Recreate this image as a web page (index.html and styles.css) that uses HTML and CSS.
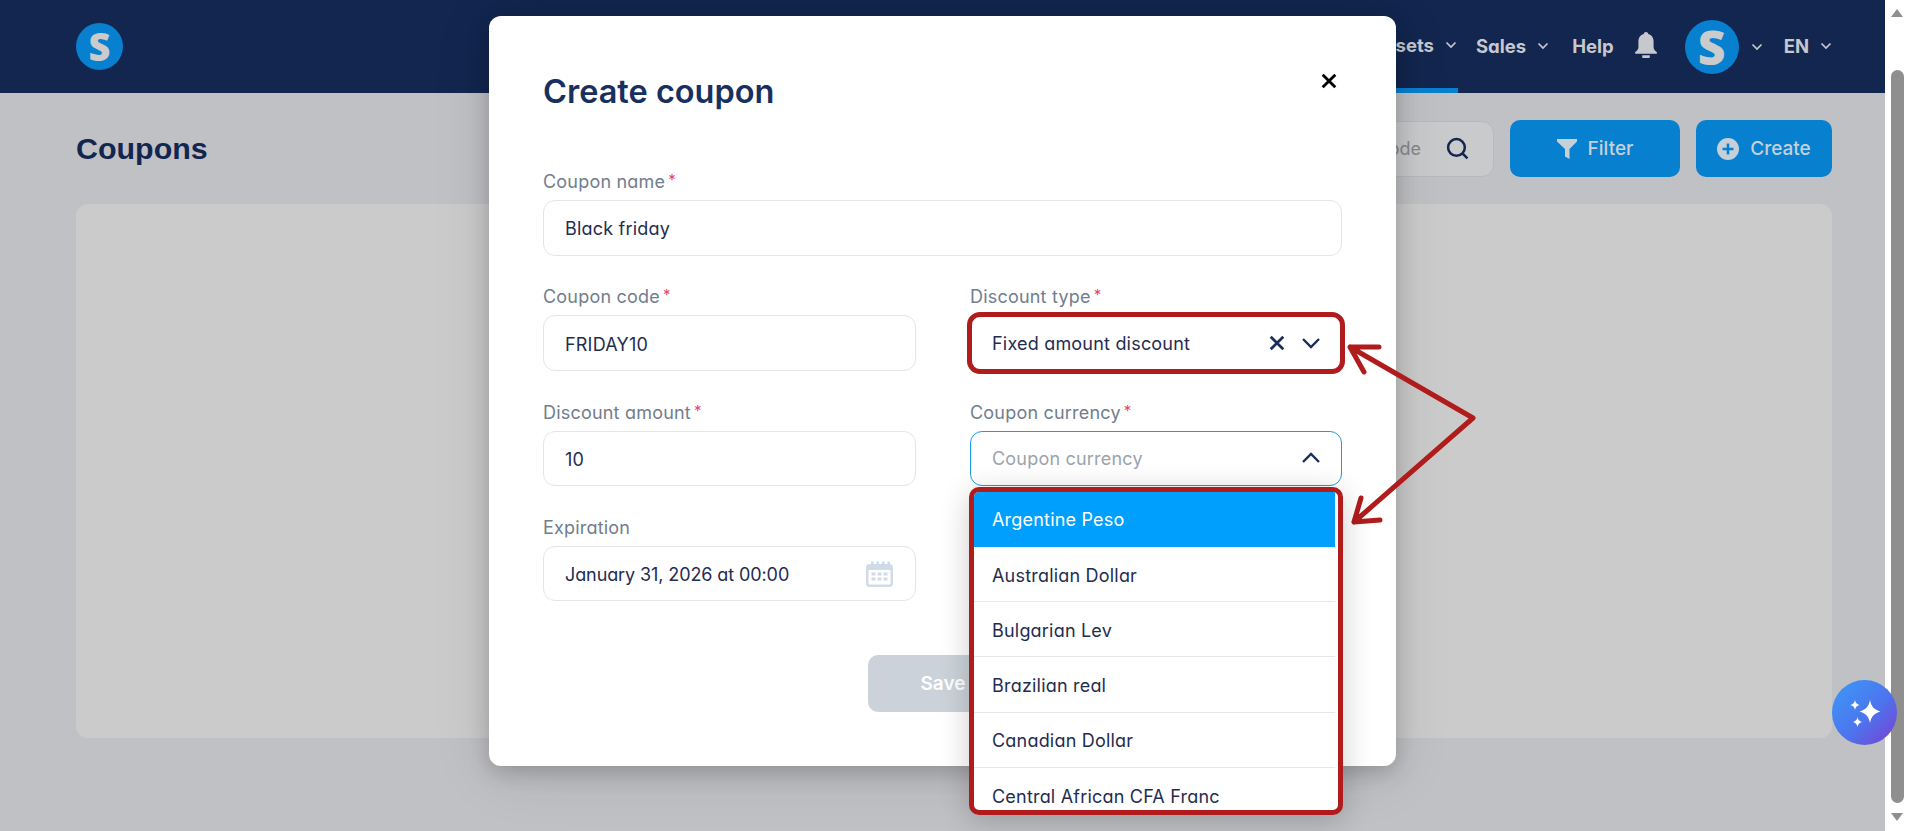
FILE: index.html
```html
<!DOCTYPE html>
<html lang="en">
<head>
<meta charset="utf-8">
<title>Coupons</title>
<link rel="stylesheet" href="styles.css">
</head>
<body>
<div class="app">
  <div class="page">
    <header class="topbar">
      <div class="logo">S</div>
      <nav class="nav">
        <div class="nav-item active"><span>Assets</span><svg class="chev" viewBox="0 0 12 8"><path d="M1.5 1.5 6 6l4.5-4.5"/></svg></div>
        <div class="nav-item"><span>Sales</span><svg class="chev" viewBox="0 0 12 8"><path d="M1.5 1.5 6 6l4.5-4.5"/></svg></div>
        <div class="nav-item"><span>Help</span></div>
        <svg class="bell" viewBox="0 0 22 24"><path d="M11 0c1.2 0 2 .8 2.1 1.9C16.5 2.800 18 5.600 18 9v5c0 1.500 1 3 3 4.500V20H1v-1.500C3 17 4 15.500 4 14V9c0-3.400 1.500-6.200 4.900-7.100C9 .8 9.800 0 11 0ZM7.500 21.500h7V23c0 .6-.4 1-1 1h-5c-.6 0-1-.4-1-1Z"/></svg>
        <div class="avatar">S</div>
        <svg class="chev avatar-chev" viewBox="0 0 12 8"><path d="M1.5 1.5 6 6l4.500-4.500"/></svg>
        <div class="nav-item lang"><span>EN</span><svg class="chev" viewBox="0 0 12 8"><path d="M1.5 1.5 6 6l4.500-4.500"/></svg></div>
      </nav>
    </header>
    <main class="content">
      <div class="toolbar">
        <h1 class="page-title">Coupons</h1>
        <div class="actions">
          <div class="search">
            <span class="search-text">Search by code</span>
            <svg class="search-icon" viewBox="0 0 22 22"><circle cx="10" cy="10" r="8"/><path d="m16 16 4.500 4.500"/></svg>
          </div>
          <button class="btn btn-filter"><svg class="btn-icon" viewBox="0 0 20 20"><path d="M0 0h20v2.500L12.500 10v10L8 17.500V10L0 2.500Z"/></svg>Filter</button>
          <button class="btn btn-create"><svg class="btn-icon" viewBox="0 0 22 22"><path fill-rule="evenodd" d="M11 0a11 11 0 1 1 0 22 11 11 0 0 1 0-22Zm-1.300 5.500v4.200H5.500v2.600h4.200v4.200h2.600v-4.200h4.200V9.700h-4.200V5.500Z"/></svg>Create</button>
        </div>
      </div>
      <section class="card"></section>
    </main>
  </div>
  <aside class="scrollbar">
    <span class="arrow-up"></span>
    <div class="thumb"></div>
    <span class="arrow-down"></span>
  </aside>
</div>

<div class="modal">
  <div class="modal-head">
    <h2 class="modal-title">Create coupon</h2>
    <svg class="close" viewBox="0 0 14 14"><path d="m1.500 1.500 11 11m0-11-11 11"/></svg>
  </div>
  <div class="form">
    <div class="group span">
      <label class="label">Coupon name<i>*</i></label>
      <div class="input">Black friday</div>
    </div>
    <div class="group">
      <label class="label">Coupon code<i>*</i></label>
      <div class="input">FRIDAY10</div>
    </div>
    <div class="group">
      <label class="label">Discount type<i>*</i></label>
      <div class="input select marked">
        <span>Fixed amount discount</span>
        <svg class="clear" viewBox="0 0 14 14"><path d="m1.500 1.500 11 11m0-11-11 11"/></svg>
        <svg class="select-chev" viewBox="0 0 20 12"><path d="m2 2 8 8 8-8"/></svg>
      </div>
    </div>
    <div class="group">
      <label class="label">Discount amount<i>*</i></label>
      <div class="input">10</div>
    </div>
    <div class="group currency">
      <label class="label">Coupon currency<i>*</i></label>
      <div class="input select open">
        <span class="placeholder">Coupon currency</span>
        <svg class="select-chev" viewBox="0 0 20 12"><path d="m2 10 8-8 8 8"/></svg>
      </div>
      <ul class="dropdown">
        <li class="selected">Argentine Peso</li>
        <li>Australian Dollar</li>
        <li>Bulgarian Lev</li>
        <li>Brazilian real</li>
        <li>Canadian Dollar</li>
        <li>Central African CFA Franc</li>
      </ul>
    </div>
    <div class="group">
      <label class="label">Expiration</label>
      <div class="input select">
        <span class="date">January 31, 2026 at 00:00</span>
        <svg class="calendar" viewBox="0 0 27 27"><path fill-rule="evenodd" d="M5 1.500h2.500V4h3V1.500H13V4h3V1.500h2.500V4h3V1.500H24V4c2 .3 3 1.500 3 3.500v16c0 2.200-1.300 3.500-3.500 3.500h-20C1.300 27 0 25.700 0 23.500v-16C0 5.500 1 4.300 3 4h2ZM2.500 10v13.500c0 .7.300 1 1 1h20c.7 0 1-.3 1-1V10ZM5.500 12.500h4v3h-4Zm6 0h4v3h-4Zm6 0h4v3h-4Zm-12 5h4v3h-4Zm6 0h4v3h-4Zm6 0h4v3h-4Z"/></svg>
      </div>
    </div>
  </div>
  <button class="save">Save</button>
</div>

<svg class="annotation" viewBox="0 0 1908 831">
  <path d="M1473 418 1350 347M1379 347h-29l14 25M1473 418 1354 522M1380 520l-26 2 7-24"/>
</svg>

<button class="assistant">
  <svg viewBox="0 0 65 65"><path d="M38 20c1.500 7 4 9.500 10.500 11.500C42 33.500 39.500 36 38 43c-1.500-7-4-9.500-10.500-11.500C34 29.500 36.500 27 38 20ZM23 20c.6 3 1.800 4.200 4.500 5-2.700.8-3.900 2-4.500 5-.6-3-1.800-4.200-4.500-5 2.700-.8 3.900-2 4.500-5ZM25.500 37c.6 3 1.800 4.200 4.500 5-2.700.8-3.900 2-4.500 5-.6-3-1.800-4.200-4.500-5 2.700-.8 3.900-2 4.500-5Z"/></svg>
</button>
</body>
</html>
```

FILE: styles.css
```css
* { box-sizing: border-box; }
html, body { margin: 0; height: 100%; overflow: hidden; }
body {
  font-family: Inter, "Liberation Sans", sans-serif;
  color: #1f2d50;
  background: #c0c1c4;
  position: relative;
}
.app { display: flex; height: 831px; }
.page { flex: 1; min-width: 0; }

.topbar {
  height: 93px;
  background: #12264f;
  display: flex;
  align-items: center;
  justify-content: space-between;
  padding: 0 53px 0 76px;
}
.logo {
  width: 47px;
  height: 47px;
  border-radius: 50%;
  background: #0880d0;
  color: #cbcbcb;
  font: 800 38px/47px "Open Sans", sans-serif;
  text-align: center;
  margin-top: -1px;
}
.nav {
  display: flex;
  align-items: center;
  height: 93px;
  color: #c6c8ce;
  font-size: 18.500px;
  font-weight: 700;
  font-feature-settings: "cv11";
}
.nav-item {
  height: 93px;
  display: flex;
  align-items: center;
  gap: 11px;
  padding-right: 1px;
  padding-bottom: 2px;
  margin-right: 22px;
}
.nav-item.active { border-bottom: 5px solid #0880d0; padding-top: 2px; padding-bottom: 0; margin-right: 18px; }
.chev { width: 12px; height: 8px; fill: none; stroke: #c6c8ce; stroke-width: 1.700; }
.bell { width: 24px; height: 26px; fill: #c6c8ce; margin: -3px 27px 0 -3px; }
.avatar {
  width: 54px;
  height: 54px;
  border-radius: 50%;
  background: #0880d0;
  color: #cbcbcb;
  font: 800 48px/54px "Open Sans", sans-serif;
  text-align: center;
  margin: 0 12px 0 0;
}
.avatar-chev { margin-right: 21px; }
.lang { margin-right: 0; padding-right: 0; }

.content { padding: 27px 53px 0 76px; }
.toolbar {
  display: flex;
  align-items: center;
  justify-content: space-between;
  margin-bottom: 27px;
}
.page-title {
  margin: 0;
  font: 700 30.400px/57px "Liberation Sans", sans-serif;
  color: #12264f;
}
.actions { display: flex; gap: 16px; align-items: center; }
.search {
  width: 300px;
  height: 56px;
  border: 1px solid #b8b9bc;
  border-radius: 12px;
  background: #c9cacc;
  display: flex;
  align-items: center;
  justify-content: flex-end;
  gap: 25px;
  padding: 0 24px 0 0;
  color: #85878c;
  font-size: 18px;
  white-space: nowrap;
}
.search-icon { width: 23px; height: 23px; fill: none; stroke: #12264f; stroke-width: 2.400; }
.btn {
  height: 57px;
  border: 0;
  border-radius: 10px;
  background: #0880d0;
  color: #c5d0d9;
  font: 500 19px Inter, sans-serif;
  display: flex;
  align-items: center;
  justify-content: center;
  gap: 11px;
  padding: 0;
}
.btn-filter { width: 170px; }
.btn-create { width: 136px; }
.btn-icon { width: 20px; height: 20px; fill: #c5d0d9; }
.btn-create .btn-icon { width: 22px; height: 22px; }

.card {
  height: 534px;
  background: #cbcbcb;
  border-radius: 12px;
}

.scrollbar {
  width: 23px;
  background: #fff;
  display: flex;
  flex-direction: column;
  align-items: center;
  padding-left: 1px;
}
.arrow-up {
  margin-top: 9px;
  border: solid transparent;
  border-width: 0 6px 8px;
  border-bottom-color: #8f8f8f;
}
.thumb {
  width: 13px;
  height: 733px;
  margin-top: 53px;
  background: #8f8f8f;
  border-radius: 7px;
}
.arrow-down {
  margin-top: 10px;
  border: solid transparent;
  border-width: 8px 6px 0;
  border-top-color: #8f8f8f;
}

.modal {
  position: absolute;
  left: 489px;
  top: 16px;
  width: 907px;
  height: 750px;
  background: #fff;
  border-radius: 12px;
  padding: 54px 53px 0 54px;
  box-shadow: 0 6px 22px rgba(0, 0, 0, .2), 0 8px 60px rgba(0, 0, 0, .1);
}
.modal-head {
  display: flex;
  justify-content: space-between;
  align-items: flex-start;
  margin-bottom: 57px;
}
.modal-title {
  margin: 0;
  font: 600 32.500px/44px Inter, sans-serif;
  color: #18305f;
}
.close {
  width: 16px;
  height: 16px;
  margin: 3px 6px 0 0;
  fill: none;
  stroke: #000;
  stroke-width: 2.500;
}
.form {
  display: grid;
  grid-template-columns: 373px 372px;
  column-gap: 54px;
  row-gap: 30.800px;
}
.span { grid-column: 1 / -1; }
.group { position: relative; }
.label {
  display: block;
  height: 22px;
  margin-bottom: 7px;
  font-size: 18px;
  letter-spacing: .2px;
  line-height: 22px;
  color: #727d8d;
  font-feature-settings: "cv11";
  font-weight: 400;
}
.label i { color: #e8436b; font-size: 15px; font-style: normal; margin-left: 3px; position: relative; top: -3px; }
.input {
  height: 55.500px;
  border: 1px solid #e3e5e8;
  border-radius: 12px;
  padding: 2px 21px 0;
  display: flex;
  align-items: center;
  font-size: 18px;
  letter-spacing: .2px;
  color: #1f2d50;
  font-feature-settings: "cv11";
}
.select span { flex: 1; }
.select .date { letter-spacing: -.1px; }
.marked { outline: 5px solid #b01c1c; outline-offset: -2px; border-radius: 10px; padding-top: 0; }
.open { border-color: #1a9bea; padding-top: 0; }
.placeholder { color: #9aa3af; }
.clear { width: 16px; height: 16px; fill: none; stroke: #1b2d5a; stroke-width: 2.400; margin: 0 16px 0 0; }
.select-chev { width: 20px; height: 12px; fill: none; stroke: #1b2d5a; stroke-width: 2.400; margin: 0 -1px 0 0; }
.calendar { width: 27px; height: 27px; fill: #cfdbe8; margin: -2px 0 0 0; position: relative; left: -1px; }

.dropdown {
  position: absolute;
  left: -1px;
  top: 85px;
  width: 374px;
  height: 328px;
  margin: 0;
  padding: 0 3px 0 0;
  list-style: none;
  background: #fff;
  border: 5px solid #b01c1c;
  border-radius: 10px;
  overflow: hidden;
  box-shadow: 0 6px 30px rgba(0, 0, 0, .2);
  z-index: 2;
  font-size: 18px;
  letter-spacing: .2px;
  font-feature-settings: "cv11";
}
.dropdown li {
  height: 55.300px;
  padding: 2px 0 0 18px;
  display: flex;
  align-items: center;
  border-bottom: 1px solid #e6e8eb;
}
.dropdown .selected { background: #009ffd; color: #fff; border-bottom: 0; padding-top: 0; }

.save {
  display: block;
  width: 150px;
  height: 57px;
  margin: 54px auto 0;
  border: 0;
  border-radius: 10px;
  background: #cbd2d9;
  color: #fff;
  font: 600 19px Inter, sans-serif;
}

.annotation {
  position: absolute;
  left: 0;
  top: 0;
  width: 1908px;
  height: 831px;
  pointer-events: none;
  fill: none;
  stroke: #b01c1c;
  stroke-width: 5;
  stroke-linecap: round;
  stroke-linejoin: round;
}
.assistant {
  position: absolute;
  left: 1832px;
  top: 680px;
  width: 65px;
  height: 65px;
  padding: 0;
  border: 0;
  border-radius: 50%;
  background: linear-gradient(135deg, #3b9bf7 0%, #4d74ee 55%, #7a3fcf 100%);
}
.assistant svg { display: block; width: 65px; height: 65px; fill: #fff; }
```
